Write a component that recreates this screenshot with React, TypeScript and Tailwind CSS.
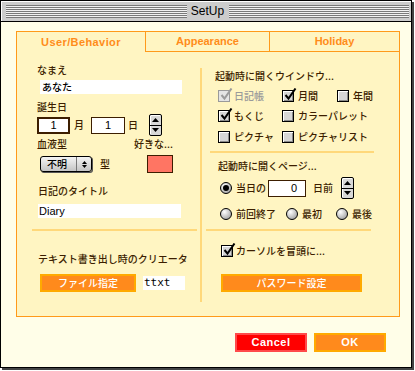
import React from 'react';

const brown = 'text-[#3c1e00]';

const Check: React.FC<{ checked?: boolean; disabled?: boolean }> = ({ checked, disabled }) => (
    <span
        className={`relative inline-block w-[12px] h-[12px] shrink-0 border ${disabled ? 'border-[#9a9a9a] bg-[#e4e4e4]' : 'border-black bg-[#d6d6d6] shadow-[inset_1px_1px_0_#fff,inset_-1px_-1px_0_#8a8a8a]'}`}
    >
        {checked && (
            <svg className="absolute left-[1px] -top-[3px]" width="13" height="13" viewBox="0 0 13 13">
                <path d="M1.5 7 L4.5 10.5 L11.5 0.5" stroke={disabled ? '#9a9a9a' : '#000'} strokeWidth="2" fill="none" />
            </svg>
        )}
    </span>
);

const Radio: React.FC<{ on?: boolean }> = ({ on }) => (
    <span className="relative inline-flex items-center justify-center w-[12px] h-[12px] shrink-0 rounded-full border border-black bg-[radial-gradient(circle_at_35%_30%,#ffffff,#bdbdbd_60%,#8c8c8c)]">
        {on && <span className="w-[6px] h-[6px] rounded-full bg-black"></span>}
    </span>
);

const Stepper: React.FC = () => (
    <div className="w-[13px] h-[22px] shrink-0 border border-black rounded-[2px] bg-[#d8d8d8] flex flex-col shadow-[inset_1px_1px_0_#fff]">
        <div className="flex-1 flex items-center justify-center border-b border-black">
            <svg width="7" height="4" viewBox="0 0 7 4"><path d="M0 4 L3.5 0 L7 4 Z" fill="#000" /></svg>
        </div>
        <div className="flex-1 flex items-center justify-center">
            <svg width="7" height="4" viewBox="0 0 7 4"><path d="M0 0 L3.5 4 L7 0 Z" fill="#000" /></svg>
        </div>
    </div>
);

const OrangeButton: React.FC<{ label: string; w: string }> = ({ label, w }) => (
    <div className={`${w} h-[18px] border-2 border-[#ffaa00] bg-[#ff8a1c] flex items-center justify-center text-white text-[10px] leading-none`}>
        {label}
    </div>
);

export default function App() {
    return (
        <div className="w-[415px] h-[371px] bg-white [font-family:'Noto_Sans_CJK_JP',sans-serif]">
            <div className="w-[412px] h-[368px] border border-black shadow-[2px_2px_0_#444] bg-[#fffee8] flex flex-col">
                {/* title bar */}
                <div className="h-[21px] shrink-0 border-b border-black bg-[#cccccc] flex items-center pl-[5px] pr-[2px] shadow-[inset_1px_1px_0_#fff]">
                    <div className="flex-1 h-[13px] bg-[repeating-linear-gradient(to_bottom,#7a7a7a_0px,#7a7a7a_1px,#f2f2f2_1px,#f2f2f2_2px)]"></div>
                    <div className="w-[42px] text-center text-[12px] leading-none text-black [font-family:'Liberation_Sans',sans-serif]">SetUp</div>
                    <div className="flex-1 h-[13px] bg-[repeating-linear-gradient(to_bottom,#7a7a7a_0px,#7a7a7a_1px,#f2f2f2_1px,#f2f2f2_2px)]"></div>
                </div>

                {/* panel */}
                <div className="ml-[15px] mt-[9px] w-[384px] h-[286px] border border-[#ff9a1a] bg-[#fff5c2] flex flex-col">
                    <div className="flex h-[20px] shrink-0 text-[11px] font-bold text-[#ff8c1a] [font-family:'Liberation_Sans',sans-serif]">
                        <div className="w-[128px] flex items-center justify-center tracking-[0.4px]">User/Behavior</div>
                        <div className="w-[124px] flex items-center justify-center border-l border-b border-[#ff9a1a]">Appearance</div>
                        <div className="w-[130px] flex items-center justify-center border-l border-b border-[#ff9a1a]">Holiday</div>
                    </div>

                    <div className={`flex flex-1 text-[10px] leading-[14px] font-medium ${brown}`}>
                        {/* left column */}
                        <div className="w-[183px] flex flex-col items-start">
                            <div className="ml-[20px] mt-[11px] h-[14px]">なまえ</div>
                            <div className="ml-[23px] mt-[3px] w-[142px] h-[14px] bg-white pl-[2px] text-black">あなた</div>
                            <div className="ml-[20px] mt-[6px] h-[14px]">誕生日</div>
                            <div className="ml-[20px] h-[22px] flex items-center">
                                <div className="w-[33px] h-[17px] border-2 border-[#3c1e00] bg-white flex items-center justify-center text-black text-[11px] font-normal [font-family:'Liberation_Sans',sans-serif]">1</div>
                                <span className="ml-[4px] w-[10px]">月</span>
                                <div className="ml-[7px] w-[34px] h-[17px] border border-[#3c1e00] bg-white flex items-center justify-center text-black text-[11px] font-normal [font-family:'Liberation_Sans',sans-serif]">1</div>
                                <span className="ml-[3px] w-[10px]">日</span>
                                <div className="ml-[11px]"><Stepper /></div>
                            </div>
                            <div className="ml-[20px] mt-[1px] h-[14px] flex">
                                <span className="w-[97px]">血液型</span>
                                <span>好きな...</span>
                            </div>
                            <div className="ml-[23px] mt-[4px] h-[18px] flex items-center">
                                <div className="w-[52px] h-[16px] border border-black rounded-[3px] bg-[linear-gradient(to_bottom,#f4f4f4,#c4c4c4)] shadow-[1px_1px_0_#555] flex items-center text-black">
                                    <span className="w-[35px] pl-[6px]">不明</span>
                                    <span className="h-full border-l border-[#777]"></span>
                                    <span className="flex-1 flex flex-col items-center justify-center gap-[1px]">
                                        <svg width="5" height="3" viewBox="0 0 5 3"><path d="M0 3 L2.5 0 L5 3 Z" fill="#000" /></svg>
                                        <svg width="5" height="3" viewBox="0 0 5 3"><path d="M0 0 L2.5 3 L5 0 Z" fill="#000" /></svg>
                                    </span>
                                </div>
                                <span className="ml-[8px] w-[10px]">型</span>
                                <div className="ml-[37px] w-[26px] h-[18px] border border-[#3c1e00] bg-[#ff7563]"></div>
                            </div>
                            <div className="ml-[21px] mt-[11px] h-[14px]">日記のタイトル</div>
                            <div className="ml-[21px] mt-[6px] w-[143px] h-[14px] bg-white pl-[1px] text-black text-[11px] font-normal [font-family:'Liberation_Sans',sans-serif]">Diary</div>
                            <div className="ml-[15px] mt-[11px] w-[165px] h-[2px] bg-[#ffd87a]"></div>
                            <div className="ml-[21px] mt-[21px] h-[14px]">テキスト書き出し時のクリエータ</div>
                            <div className="ml-[23px] mt-[8px] h-[18px] flex items-center">
                                <OrangeButton label="ファイル指定" w="w-[96px]" />
                                <div className="ml-[7px] w-[42px] h-[14px] bg-white pl-[1px] text-black text-[11px] font-normal [font-family:'DejaVu_Sans_Mono',monospace]">ttxt</div>
                            </div>
                        </div>

                        <div className="w-[2px] mt-[16px] h-[234px] bg-[#ffd87a]"></div>

                        {/* right column */}
                        <div className="flex-1 flex flex-col items-start">
                            <div className="ml-[13px] mt-[17px] h-[14px]">起動時に開くウインドウ...</div>
                            <div className="ml-[16px] mt-[6px] h-[14px] flex items-center">
                                <span className="w-[64px] flex items-center gap-[4px] text-[#9a9a9a]"><Check checked disabled />日記帳</span>
                                <span className="w-[55px] flex items-center gap-[4px]"><Check checked />月間</span>
                                <span className="flex items-center gap-[4px]"><Check />年間</span>
                            </div>
                            <div className="ml-[16px] mt-[6px] h-[14px] flex items-center">
                                <span className="w-[64px] flex items-center gap-[4px]"><Check checked />もくじ</span>
                                <span className="flex items-center gap-[4px]"><Check />カラーパレット</span>
                            </div>
                            <div className="ml-[16px] mt-[7px] h-[14px] flex items-center">
                                <span className="w-[64px] flex items-center gap-[4px]"><Check />ピクチャ</span>
                                <span className="flex items-center gap-[4px]"><Check />ピクチャリスト</span>
                            </div>
                            <div className="ml-[8px] mt-[7px] w-[164px] h-[2px] bg-[#ffd87a]"></div>
                            <div className="ml-[16px] mt-[6px] h-[14px]">起動時に開くページ...</div>
                            <div className="ml-[18px] mt-[4px] h-[22px] flex items-center">
                                <Radio on />
                                <span className="ml-[4px] w-[32px]">当日の</span>
                                <div className="w-[38px] h-[17px] border border-[#3c1e00] bg-white flex items-center justify-end pr-[8px] text-black text-[11px] font-normal [font-family:'Liberation_Sans',sans-serif]">0</div>
                                <span className="ml-[7px] w-[20px]">日前</span>
                                <div className="ml-[8px]"><Stepper /></div>
                            </div>
                            <div className="ml-[18px] mt-[8px] h-[14px] flex items-center">
                                <span className="w-[66px] flex items-center gap-[4px]"><Radio />前回終了</span>
                                <span className="w-[50px] flex items-center gap-[4px]"><Radio />最初</span>
                                <span className="flex items-center gap-[4px]"><Radio />最後</span>
                            </div>
                            <div className="ml-[4px] mt-[8px] w-[165px] h-[2px] bg-[#ffd87a]"></div>
                            <div className="ml-[19px] mt-[13px] h-[14px] flex items-center gap-[3px]">
                                <Check checked />カーソルを冒頭に...
                            </div>
                            <div className="ml-[19px] mt-[16px]">
                                <OrangeButton label="パスワード設定" w="w-[141px]" />
                            </div>
                        </div>
                    </div>
                </div>

                {/* buttons */}
                <div className="mt-[16px] flex justify-end gap-[7px] pr-[25px] text-[11px] font-bold text-white [font-family:'Liberation_Sans',sans-serif] tracking-[0.5px]">
                    <div className="w-[72px] h-[19px] border-2 border-[#ff4a4a] bg-[#ff0000] flex items-center justify-center">Cancel</div>
                    <div className="w-[72px] h-[19px] border-2 border-[#ffaa00] bg-[#ff8a1c] flex items-center justify-center">OK</div>
                </div>
            </div>
        </div>
    );
}
